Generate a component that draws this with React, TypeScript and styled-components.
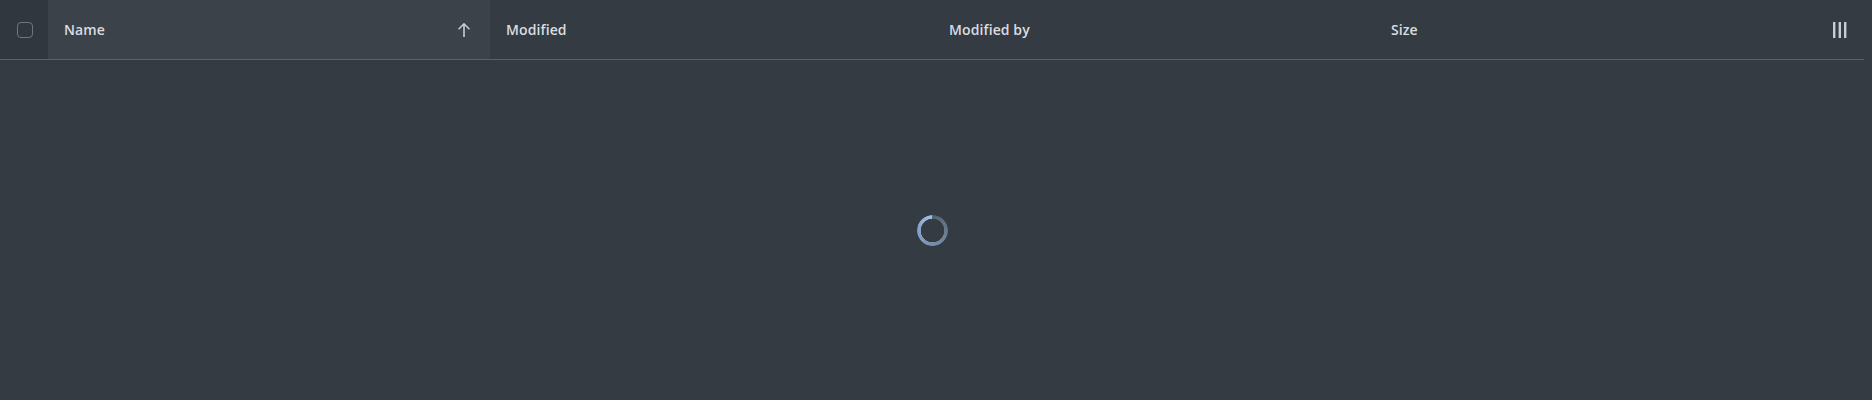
import React from "react";
import styled, { createGlobalStyle } from "styled-components";

const Global = createGlobalStyle`
  html, body {
    margin: 0;
    padding: 0;
    background: #343b42;
    font-family: "Open Sans", "Noto Sans", sans-serif;
  }
`;

const Page = styled.div`
  width: calc(100% - 8px);
  height: 400px;
  display: flex;
  flex-direction: column;
  background: #343b42;
`;

const HeaderRow = styled.div`
  display: flex;
  height: 59px;
  border-bottom: 1px solid #56636b;
  flex-shrink: 0;
`;

const CheckCell = styled.div`
  width: 48px;
  display: flex;
  align-items: center;
  justify-content: center;
  background: #30373e;
  padding-left: 2px;
  box-sizing: border-box;
`;

const CheckBox = styled.span`
  width: 16px;
  height: 16px;
  box-sizing: border-box;
  border: 1.5px solid #6e777e;
  border-radius: 4px;
`;

const HeadCell = styled.div<{ $w?: number; $sorted?: boolean }>`
  ${(p) => (p.$w ? `width: ${p.$w}px;` : "flex: 1;")}
  box-sizing: border-box;
  display: flex;
  align-items: center;
  justify-content: space-between;
  padding: 0 18px 0 16px;
  background: ${(p) => (p.$sorted ? "#3b4249" : "transparent")};
  color: #dadde0;
  font-size: 14px;
  font-weight: 600;
  letter-spacing: 0.1px;
`;

const IconCell = styled.div`
  display: flex;
  align-items: center;
  padding-right: 16px;
`;

const Body = styled.div`
  flex: 1;
  display: flex;
  align-items: center;
  justify-content: center;
`;

const Spinner = styled.div`
  width: 31px;
  height: 31px;
  border-radius: 50%;
  background: conic-gradient(from 0deg, #55626c 0deg, #6b8098 110deg, #88a7d0 290deg, #a2c0ea 360deg);
  -webkit-mask: radial-gradient(circle, transparent 11.5px, #000 12px);
  mask: radial-gradient(circle, transparent 11.5px, #000 12px);
`;

const ArrowUp = () => (
  <svg width="16" height="16" viewBox="0 0 16 16" fill="none">
    <path d="M8 15V1.8M2.6 7.2L8 1.8l5.4 5.4" stroke="#c9cdd1" strokeWidth="1.6" />
  </svg>
);

const ColumnsIcon = () => (
  <svg width="16" height="16" viewBox="0 0 16 16">
    <rect x="1" y="0" width="2.4" height="16" fill="#c9cdd1" />
    <rect x="6.6" y="0" width="2.4" height="16" fill="#c9cdd1" />
    <rect x="12" y="0" width="2.4" height="16" fill="#c9cdd1" />
  </svg>
);

export default function App() {
  return (
    <>
      <Global />
      <Page>
        <HeaderRow>
          <CheckCell>
            <CheckBox />
          </CheckCell>
          <HeadCell $w={442} $sorted>
            <span>Name</span>
            <ArrowUp />
          </HeadCell>
          <HeadCell $w={443}>Modified</HeadCell>
          <HeadCell $w={442}>Modified by</HeadCell>
          <HeadCell>Size</HeadCell>
          <IconCell>
            <ColumnsIcon />
          </IconCell>
        </HeaderRow>
        <Body>
          <Spinner />
        </Body>
      </Page>
    </>
  );
}
